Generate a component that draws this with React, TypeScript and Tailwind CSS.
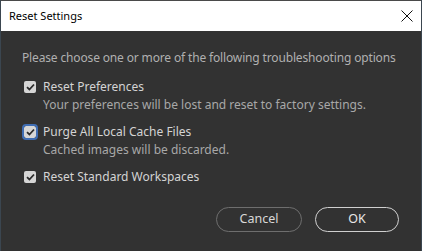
const Check = ({ focused }: { focused?: boolean }) => (
  <span
    className={
      "flex h-[12px] w-[12px] shrink-0 items-center justify-center rounded-[2px] bg-[#d6d6d6] " +
      (focused ? "outline outline-2 outline-[#3f6db3]" : "")
    }
  >
    <svg width="9" height="8" viewBox="0 0 9 8" fill="none">
      <path d="M1 4.2 L3.4 6.5 L8 1.5" stroke="#2b2b2b" strokeWidth="1.8" />
    </svg>
  </span>
);

const Option = ({
  label,
  hint,
  focused,
}: {
  label: string;
  hint?: string;
  focused?: boolean;
}) => (
  <div className="flex flex-col">
    <div className="flex h-[18px] items-center gap-[7px]">
      <Check focused={focused} />
      <span className="text-[12px] leading-[18px] text-[#d4d4d4]">{label}</span>
    </div>
    {hint && (
      <span className="pl-[19px] text-[12px] leading-[18px] text-[#a8a8a8]">{hint}</span>
    )}
  </div>
);

export default function App() {
  return (
    <div
      className="flex h-[251px] w-[422px] flex-col overflow-hidden border-x border-[#3b4650] bg-[#323232]"
      style={{ fontFamily: '"Noto Sans", "Open Sans", sans-serif' }}
    >
      <div className="flex h-[31px] shrink-0 items-center justify-between border-t border-[#4a4a4a] bg-white pl-[8px] pr-[8px]">
        <span className="text-[11px] text-black">Reset Settings</span>
        <svg width="12" height="12" viewBox="0 0 12 12">
          <path d="M0.5 0.5 L11.5 11.5 M11.5 0.5 L0.5 11.5" stroke="#111" strokeWidth="1" />
        </svg>
      </div>
      <div className="flex flex-1 flex-col px-[21px] pt-[18px]">
        <p className="whitespace-nowrap text-[12px] leading-[18px] tracking-[-0.15px] text-[#b0b0b0]">
          Please choose one or more of the following troubleshooting options
        </p>
        <div className="mt-[11px] flex flex-col gap-[9px] pl-[2px]">
          <Option
            label="Reset Preferences"
            hint="Your preferences will be lost and reset to factory settings."
          />
          <Option label="Purge All Local Cache Files" hint="Cached images will be discarded." focused />
          <Option label="Reset Standard Workspaces" />
        </div>
        <div className="mt-[21px] flex justify-end gap-[13px] pr-[1px]">
          <button className="h-[25px] w-[86px] rounded-full border border-[#6e6e6e] text-[12.5px] text-[#d8d8d8]">
            Cancel
          </button>
          <button className="h-[25px] w-[84px] rounded-full border-[1.5px] border-[#d0d0d0] text-[12.5px] text-[#e8e8e8]">
            OK
          </button>
        </div>
      </div>
    </div>
  );
}
